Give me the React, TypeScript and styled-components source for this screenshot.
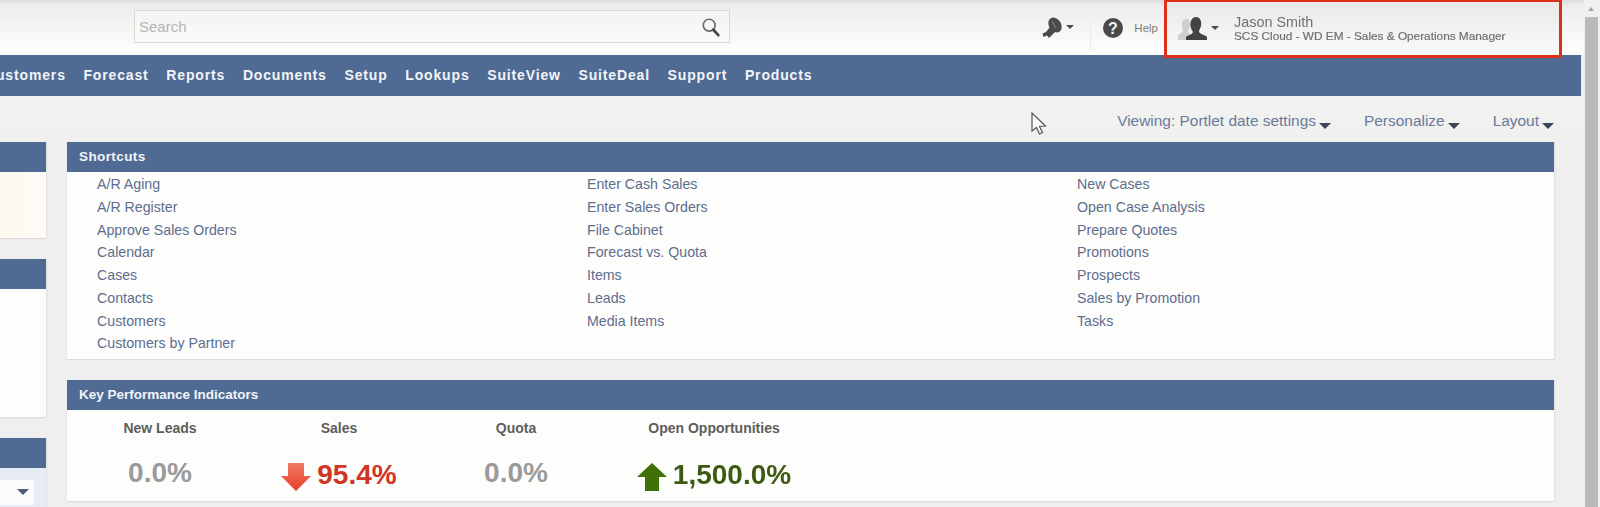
import React from 'react';
import styled, { createGlobalStyle } from 'styled-components';

const GlobalStyle = createGlobalStyle`
  html, body {
    margin: 0;
    padding: 0;
    height: 100%;
    overflow: hidden;
    background: #efefef;
    font-family: "Liberation Sans", Arial, sans-serif;
  }
`;

const Page = styled.div`
  position: relative;
  display: flex;
  width: 1600px;
  height: 507px;
  overflow: hidden;
  filter: blur(0.6px);
`;

const Main = styled.div`
  flex: 1;
  min-width: 0;
  display: flex;
  flex-direction: column;
`;

const Header = styled.header`
  height: 55px;
  box-sizing: border-box;
  display: flex;
  align-items: center;
  padding-left: 134px;
  background: linear-gradient(#dcdcdc 0, #ececec 5px, #f4f4f3 25px, #fdfdfc 52px);
`;

const SearchBox = styled.div`
  width: 596px;
  height: 33px;
  box-sizing: border-box;
  margin-top: -2px;
  display: flex;
  align-items: center;
  justify-content: space-between;
  padding: 0 8px 0 4px;
  border: 1px solid #d9d9d6;
  background: linear-gradient(#f3f3f2, #fbfbfa);
  color: #b4b4b4;
  font-size: 15px;
`;

const HeaderTools = styled.div`
  margin-left: auto;
  display: flex;
  align-items: center;
  height: 100%;
`;

const ToolGroup = styled.div`
  display: flex;
  align-items: center;
  gap: 2px;
  height: 44px;
  padding-right: 16px;
  border-right: 1px solid #ececea;
`;

const HelpLink = styled.div`
  display: flex;
  align-items: center;
  gap: 10px;
  margin: 0 6px 0 11px;
  font-size: 11.5px;
  color: #808080;
`;

const UserBox = styled.div`
  width: 398px;
  height: 58px;
  box-sizing: border-box;
  margin: 0 22px 0 0;
  align-self: flex-start;
  display: flex;
  align-items: center;
  padding: 0 0 0 11px;
  border: 3px solid #dc3019;
  border-top-width: 2px;
  position: relative;
  z-index: 2;
  background: linear-gradient(#e9e9e8, #f3f3f2 60%, #fafafa);
`;

const UserText = styled.div`
  margin-left: 15px;
  color: #707070;
`;

const UserName = styled.div`
  font-size: 14.4px;
  line-height: 15px;
`;

const UserRole = styled.div`
  font-size: 11.8px;
  line-height: 13px;
  -webkit-text-stroke: 0.2px #707070;
  white-space: nowrap;
`;

const Nav = styled.nav`
  height: 41px;
  width: 1581px;
  flex: none;
  box-sizing: border-box;
  padding-bottom: 2px;
  display: flex;
  align-items: center;
  gap: 17.7px;
  overflow: hidden;
  background: #4f6b94;
`;

const NavItem = styled.span`
  color: #f2f4f8;
  font-size: 14px;
  font-weight: 700;
  letter-spacing: 0.85px;
  white-space: nowrap;

  &:first-child {
    margin-left: -15px;
  }
`;

const ViewBar = styled.div`
  height: 46px;
  flex: none;
  display: flex;
  align-items: center;
  justify-content: flex-end;
  gap: 33px;
  padding: 4px 30px 0 0;
  box-sizing: border-box;
  background: linear-gradient(#f2f2f1, #f0f0ef);
`;

const ViewItem = styled.span`
  display: flex;
  align-items: flex-end;
  gap: 3px;
  color: #6a7a9c;
  font-size: 15.45px;
`;

const Caret = styled.span<{ $size?: number; $color?: string }>`
  display: inline-block;
  flex: none;
  width: 0;
  height: 0;
  border-left: ${(p) => p.$size ?? 6}px solid transparent;
  border-right: ${(p) => p.$size ?? 6}px solid transparent;
  border-top: ${(p) => p.$size ?? 6}px solid ${(p) => p.$color ?? '#3c4658'};
  margin-bottom: 1px;
`;

const Content = styled.div`
  flex: 1;
  display: grid;
  grid-template-columns: 46px 1487px;
  column-gap: 21px;
  background: #efefef;
`;

const Column = styled.div`
  display: flex;
  flex-direction: column;
  gap: 21px;
`;

const Portlet = styled.section<{ $height?: number }>`
  display: flex;
  flex-direction: column;
  flex: none;
  height: ${(p) => (p.$height ? `${p.$height}px` : 'auto')};
  box-shadow: 0 1px 1px #dcdcdc, 1px 0 1px #e2e2e2;
`;

const PortletHead = styled.h2<{ $track?: number }>`
  margin: 0;
  height: 30px;
  flex: none;
  box-sizing: border-box;
  display: flex;
  align-items: center;
  padding: 0 0 2px 12px;
  background: #4f6b94;
  color: #f2f4f8;
  font-size: 13.5px;
  font-weight: 700;
  letter-spacing: ${(p) => p.$track ?? 0}px;
`;

const PortletBody = styled.div<{ $tint?: boolean }>`
  flex: 1;
  background: ${(p) => (p.$tint ? 'linear-gradient(90deg, #fdf9ef, #fdfbf4)' : '#fdfdfc')};
`;

const ShortcutGrid = styled.div`
  display: grid;
  grid-template-columns: 490px 490px 1fr;
  padding: 1px 0 0 30px;
  height: 187px;
  box-sizing: border-box;
`;

const ShortcutList = styled.ul`
  list-style: none;
  margin: 0;
  padding: 0;
`;

const ShortcutLink = styled.li`
  height: 22.75px;
  line-height: 22.75px;
  color: #5d6d8e;
  font-size: 14.2px;
  white-space: nowrap;
`;

const KpiRow = styled.div`
  display: flex;
  height: 91px;
  background: #fdfdfc;
`;

const Kpi = styled.div<{ $width: number }>`
  width: ${(p) => p.$width}px;
  display: flex;
  flex-direction: column;
  align-items: center;
`;

const KpiLabel = styled.div`
  margin-top: 10px;
  font-size: 14px;
  font-weight: 700;
  line-height: 16px;
  color: #5d5d5d;
  white-space: nowrap;
`;

const KpiValue = styled.div<{ $color: string }>`
  margin-top: 21px;
  display: flex;
  align-items: center;
  gap: 6px;
  font-size: 28px;
  font-weight: 700;
  line-height: 32px;
  color: ${(p) => p.$color};
`;

const KpiArrow = styled.svg`
  flex: none;
  margin-top: 5px;
`;

const SelectWell = styled.div`
  height: 39px;
  padding-top: 12px;
  box-sizing: border-box;
  background: #e6ebf4;
`;

const SelectStub = styled.div`
  height: 25px;
  width: 34px;
  display: flex;
  align-items: center;
  justify-content: flex-end;
  padding-right: 5px;
  box-sizing: border-box;
  background: #fbfbfb;
`;

const Scrollbar = styled.div`
  width: 16px;
  flex: none;
  display: flex;
  flex-direction: column;
  align-items: flex-start;
  background: #f0f0f0;
`;

const ScrollArrow = styled.div`
  margin: 7px 0 0 4px;
  width: 0;
  height: 0;
  border-left: 3px solid transparent;
  border-right: 3px solid transparent;
  border-bottom: 4px solid #a5a5a5;
`;

const ScrollThumb = styled.div`
  margin: 6px 0 0 1px;
  width: 13px;
  flex: 1;
  background: #bababa;
`;

const PointerWrap = styled.div`
  position: absolute;
  left: 1031px;
  top: 112px;
  z-index: 3;
  line-height: 0;
`;

const shortcuts = [
  ['A/R Aging', 'A/R Register', 'Approve Sales Orders', 'Calendar', 'Cases', 'Contacts', 'Customers', 'Customers by Partner'],
  ['Enter Cash Sales', 'Enter Sales Orders', 'File Cabinet', 'Forecast vs. Quota', 'Items', 'Leads', 'Media Items'],
  ['New Cases', 'Open Case Analysis', 'Prepare Quotes', 'Promotions', 'Prospects', 'Sales by Promotion', 'Tasks'],
];

const navItems = ['Customers', 'Forecast', 'Reports', 'Documents', 'Setup', 'Lookups', 'SuiteView', 'SuiteDeal', 'Support', 'Products'];

const SearchIcon = () => (
  <svg width="20" height="20" viewBox="0 0 22 22" fill="none">
    <circle cx="9" cy="9" r="6.5" stroke="#6a6a6a" strokeWidth="1.8" />
    <path d="M13.5 14 L19 20" stroke="#444" strokeWidth="3" strokeLinecap="round" />
  </svg>
);

const PinIcon = () => (
  <svg width="22" height="22" viewBox="0 0 22 22">
    <ellipse cx="13" cy="8" rx="6" ry="8" transform="rotate(-35 13 8)" fill="#4a4a4a" />
    <path d="M8 10 L13 15 L7 21 L5 18.5 L1.5 20 L0.5 16.5 L4 15 Z" fill="#4a4a4a" />
    <path d="M10 4 L14 11" stroke="#8a8a8a" strokeWidth="1" />
  </svg>
);

const HelpIcon = () => (
  <svg width="22" height="22" viewBox="0 0 22 22">
    <circle cx="11" cy="11" r="10" fill="#4a4a4a" />
    <text x="11" y="16.5" textAnchor="middle" fontSize="16" fontWeight="700" fontFamily="Liberation Sans" fill="#f4f4f4">?</text>
  </svg>
);

const PeopleIcon = () => (
  <svg width="30" height="24" viewBox="0 0 30 24">
    <path d="M7 2 C11 1 13 4 12 9 C11 12 10 13 10 15 L13 18 L13 23 L0 23 L0 18 C3 16 5 15 5 13 C3 10 3 4 7 2 Z" fill="#cfcfce" />
    <path d="M18 0 C22 0 24 4 23 9 C22 12 21 13 21 15 C23 18 28 18 29 20 L29 23 L8 23 L8 20 C10 18 14 18 15 15 C14 13 13 12 12.5 9 C12 4 14 0 18 0 Z" fill="#434343" />
  </svg>
);

const DownArrow = () => (
  <KpiArrow width="30" height="30" viewBox="0 0 30 30">
    <defs>
      <linearGradient id="downFill" x1="0" y1="0" x2="0" y2="1">
        <stop offset="0" stopColor="#ee7b62" />
        <stop offset="1" stopColor="#e8402a" />
      </linearGradient>
    </defs>
    <path d="M7 1 H23 V14 H30 L15 29 L0 14 H7 Z" fill="url(#downFill)" />
  </KpiArrow>
);

const UpArrow = () => (
  <KpiArrow width="30" height="30" viewBox="0 0 30 30">
    <path d="M15 1 L30 15 H22 V29 H8 V15 H0 Z" fill="#3f7108" />
  </KpiArrow>
);

const Pointer = () => (
  <svg width="16" height="24" viewBox="0 0 16 24">
    <path d="M1 1 L1 19 L5.5 15.5 L8.5 22 L11.5 20.5 L8.5 14.5 L14.5 14 Z" fill="#fafafa" stroke="#555" strokeWidth="1.2" />
  </svg>
);

const App: React.FC = () => {
  return (
    <>
      <GlobalStyle />
      <Page>
        <Main>
          <Header>
            <SearchBox>
              <span>Search</span>
              <SearchIcon />
            </SearchBox>
            <HeaderTools>
              <ToolGroup>
                <PinIcon />
                <Caret $size={4} $color="#4a4a4a" />
              </ToolGroup>
              <HelpLink>
                <HelpIcon />
                <span>Help</span>
              </HelpLink>
              <UserBox>
                <PeopleIcon />
                <Caret $size={4} $color="#4a4a4a" style={{ marginLeft: 3 }} />
                <UserText>
                  <UserName>Jason Smith</UserName>
                  <UserRole>SCS Cloud - WD EM - Sales &amp; Operations Manager</UserRole>
                </UserText>
              </UserBox>
            </HeaderTools>
          </Header>
          <Nav>
            {navItems.map((item) => (
              <NavItem key={item}>{item}</NavItem>
            ))}
          </Nav>
          <ViewBar>
            <ViewItem>Viewing: Portlet date settings<Caret /></ViewItem>
            <ViewItem>Personalize<Caret /></ViewItem>
            <ViewItem>Layout<Caret /></ViewItem>
          </ViewBar>
          <Content>
            <Column>
              <Portlet $height={96}>
                <PortletHead />
                <PortletBody $tint />
              </Portlet>
              <Portlet $height={158}>
                <PortletHead />
                <PortletBody />
              </Portlet>
              <Portlet>
                <PortletHead />
                <SelectWell>
                  <SelectStub>
                    <Caret $size={6} $color="#4c5a75" />
                  </SelectStub>
                </SelectWell>
              </Portlet>
            </Column>
            <Column>
              <Portlet>
                <PortletHead $track={0.4}>Shortcuts</PortletHead>
                <PortletBody>
                  <ShortcutGrid>
                    {shortcuts.map((list) => (
                      <ShortcutList key={list[0]}>
                        {list.map((name) => (
                          <ShortcutLink key={name}>{name}</ShortcutLink>
                        ))}
                      </ShortcutList>
                    ))}
                  </ShortcutGrid>
                </PortletBody>
              </Portlet>
              <Portlet>
                <PortletHead>Key Performance Indicators</PortletHead>
                <KpiRow>
                  <Kpi $width={186}>
                    <KpiLabel>New Leads</KpiLabel>
                    <KpiValue $color="#9a9a9a">0.0%</KpiValue>
                  </Kpi>
                  <Kpi $width={172}>
                    <KpiLabel>Sales</KpiLabel>
                    <KpiValue $color="#d03424">
                      <DownArrow />
                      95.4%
                    </KpiValue>
                  </Kpi>
                  <Kpi $width={182}>
                    <KpiLabel>Quota</KpiLabel>
                    <KpiValue $color="#9a9a9a">0.0%</KpiValue>
                  </Kpi>
                  <Kpi $width={214}>
                    <KpiLabel>Open Opportunities</KpiLabel>
                    <KpiValue $color="#3d5a12">
                      <UpArrow />
                      1,500.0%
                    </KpiValue>
                  </Kpi>
                </KpiRow>
              </Portlet>
            </Column>
          </Content>
        </Main>
        <Scrollbar>
          <ScrollArrow />
          <ScrollThumb />
        </Scrollbar>
        <PointerWrap>
          <Pointer />
        </PointerWrap>
      </Page>
    </>
  );
};

export default App;
